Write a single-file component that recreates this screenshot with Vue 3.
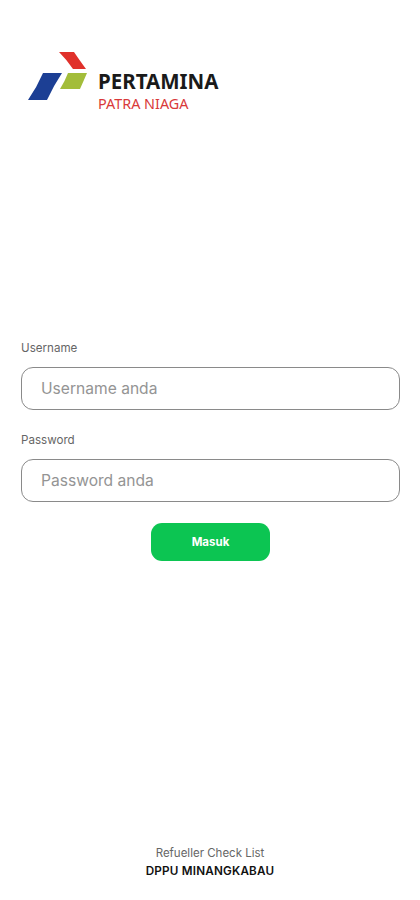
<template>
  <div class="login-page">
    <div class="logo">
      <svg class="logo-mark" width="60" height="50" viewBox="0 0 60 50">
        <path d="M31 0 H46 Q50 6 58 17 H45 Q39 8 31 0 Z" fill="#e0312b" />
        <path d="M40 21 H59 Q56 28 52 37 H32 Q37 29 40 21 Z" fill="#a3bd3a" />
        <path d="M15 21 H34 Q26 33 19 48 H0 Q9 35 15 21 Z" fill="#1c3f94" />
      </svg>
      <div class="logo-text">
        <div class="logo-name">PERTAMINA</div>
        <div class="logo-sub">PATRA NIAGA</div>
      </div>
    </div>

    <form class="login-form" @submit.prevent>
      <label class="field-label" for="username">Username</label>
      <input id="username" v-model="username" class="field-input" placeholder="Username anda" />

      <label class="field-label second" for="password">Password</label>
      <input id="password" v-model="password" class="field-input" type="password" placeholder="Password anda" />

      <button class="submit-btn" type="submit">Masuk</button>
    </form>

    <div class="footer">
      <div class="footer-app">Refueller Check List</div>
      <div class="footer-unit">DPPU MINANGKABAU</div>
    </div>
  </div>
</template>

<script setup>
import { ref } from 'vue'

const username = ref('')
const password = ref('')
</script>

<style>
html,
body {
  margin: 0;
  background: #fff;
}
</style>

<style scoped>
.login-page {
  box-sizing: border-box;
  height: 900px;
  display: flex;
  flex-direction: column;
  font-family: Inter, "Liberation Sans", sans-serif;
  background: #fff;
  overflow: hidden;
}
.logo {
  display: flex;
  gap: 10px;
  padding: 52px 0 0 28px;
  height: 60px;
}
.logo-mark {
  flex: none;
}
.logo-text {
  margin-top: 17px;
}
.logo-name {
  font-family: "Noto Sans", sans-serif;
  font-size: 20.5px;
  line-height: 24px;
  font-weight: 700;
  color: #1a1a1a;
}
.logo-sub {
  font-family: "Noto Sans", sans-serif;
  font-size: 14.4px;
  line-height: 18px;
  margin-top: 2px;
  color: #d9393a;
}
.login-form {
  display: flex;
  flex-direction: column;
  padding: 0 20px 0 21px;
  margin-top: 229px;
}
.field-label {
  font-size: 11.6px;
  line-height: 14px;
  color: #666;
  margin-bottom: 12px;
}
.field-label.second {
  margin-top: 23px;
}
.field-input {
  box-sizing: border-box;
  height: 43px;
  padding: 0 19px;
  border: 1.5px solid #8a8a8a;
  border-radius: 12px;
  outline: none;
  font-family: inherit;
  font-size: 15.6px;
  color: #333;
  background: #fff;
}
.field-input::placeholder {
  color: #949494;
  opacity: 1;
}
.submit-btn {
  align-self: center;
  width: 119px;
  height: 38px;
  margin-top: 21px;
  border: none;
  border-radius: 11px;
  background: #0cc552;
  color: #fff;
  font-family: inherit;
  font-size: 11.5px;
  font-weight: 700;
}
.footer {
  margin-top: auto;
  padding-bottom: 20px;
  text-align: center;
  font-size: 11.5px;
  line-height: 18px;
}
.footer-app {
  color: #666;
}
.footer-unit {
  color: #111;
  font-size: 11.7px;
  font-weight: 600;
  letter-spacing: 0.2px;
}
</style>
